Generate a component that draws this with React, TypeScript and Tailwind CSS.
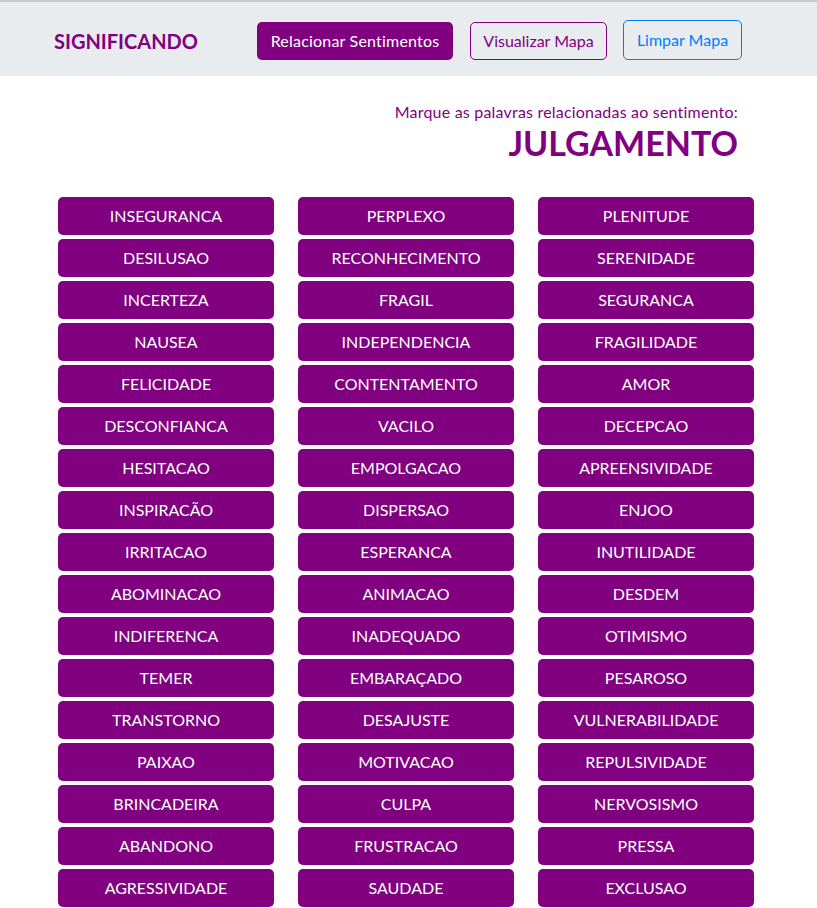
import React from 'react';

const col1 = ['INSEGURANCA', 'DESILUSAO', 'INCERTEZA', 'NAUSEA', 'FELICIDADE', 'DESCONFIANCA', 'HESITACAO', 'INSPIRACÃO', 'IRRITACAO', 'ABOMINACAO', 'INDIFERENCA', 'TEMER', 'TRANSTORNO', 'PAIXAO', 'BRINCADEIRA', 'ABANDONO', 'AGRESSIVIDADE'];
const col2 = ['PERPLEXO', 'RECONHECIMENTO', 'FRAGIL', 'INDEPENDENCIA', 'CONTENTAMENTO', 'VACILO', 'EMPOLGACAO', 'DISPERSAO', 'ESPERANCA', 'ANIMACAO', 'INADEQUADO', 'EMBARAÇADO', 'DESAJUSTE', 'MOTIVACAO', 'CULPA', 'FRUSTRACAO', 'SAUDADE'];
const col3 = ['PLENITUDE', 'SERENIDADE', 'SEGURANCA', 'FRAGILIDADE', 'AMOR', 'DECEPCAO', 'APREENSIVIDADE', 'ENJOO', 'INUTILIDADE', 'DESDEM', 'OTIMISMO', 'PESAROSO', 'VULNERABILIDADE', 'REPULSIVIDADE', 'NERVOSISMO', 'PRESSA', 'EXCLUSAO'];

// interleave the columns into row order
const words: string[] = [];
col1.forEach((w, i) => {
  words.push(w, col2[i], col3[i]);
});

const App: React.FC = () => {
  const [selected, setSelected] = React.useState<string[]>([]);

  const toggle = (w: string) => {
    setSelected(s => (s.includes(w) ? s.filter(x => x !== w) : [...s, w]));
  };

  return (
    <div className="h-screen overflow-y-scroll bg-white font-['Lato','Liberation_Sans',sans-serif] border-t-2 border-[#c9c9c9] [&::-webkit-scrollbar]:w-[10px] [&::-webkit-scrollbar-track]:bg-[#f1f1f1] [&::-webkit-scrollbar-thumb]:bg-[#c1c1c1]">
      <nav className="h-[74px] bg-[#e9ecef] flex items-center pl-[54px] pt-[4px]">
        <span className="w-[203px] text-[20px] font-bold text-[#800080]">SIGNIFICANDO</span>
        <div className="flex items-center">
          <button className="h-[38px] w-[196px] rounded-[5px] bg-[#800080] text-white text-[16px] tracking-[0.2px]">
            Relacionar Sentimentos
          </button>
          <button className="h-[38px] w-[137px] ml-[17px] rounded-[5px] border border-[#800080] text-[#800080] text-[16px]">
            Visualizar Mapa
          </button>
          <button className="h-[40px] w-[119px] ml-[16px] -mt-[2px] rounded-[5px] border border-[#007bff] text-[#007bff] text-[16px]">
            Limpar Mapa
          </button>
        </div>
      </nav>

      <main className="pt-[24px] pb-[60px]">
        <div className="w-[738px] text-right">
          <p className="text-[16px] leading-[24px] tracking-[0.2px] text-[#800080]">Marque as palavras relacionadas ao sentimento:</p>
          <h1 className="mt-[2px] text-[34px] leading-none font-bold text-[#800080]">JULGAMENTO</h1>
        </div>

        <div className="mt-[37px] ml-[58px] grid grid-cols-[216px_216px_216px] gap-x-6 gap-y-1">
          {words.map(w => (
            <button
              key={w}
              onClick={() => toggle(w)}
              className={
                selected.includes(w)
                  ? 'h-[38px] rounded-[5px] bg-[#4b004b] text-white text-[16px]'
                  : 'h-[38px] rounded-[5px] bg-[#800080] text-white text-[16px]'
              }
            >
              {w}
            </button>
          ))}
        </div>
      </main>
    </div>
  );
};

export default App;
